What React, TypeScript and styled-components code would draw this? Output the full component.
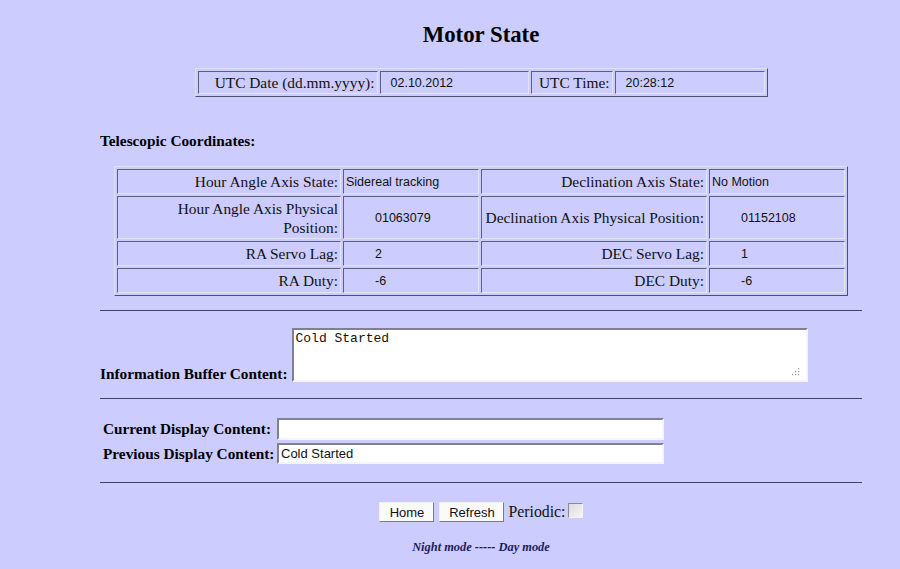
import React from "react";
import styled, { createGlobalStyle } from "styled-components";

const Global = createGlobalStyle`
  html, body { margin: 0; padding: 0; background: #ccccff; }
  body { font-family: "Liberation Serif", "Times New Roman", serif; color: #000; }
`;

const Page = styled.div`
  width: 762px;
  margin-left: 100px;
  height: 569px;
  overflow: hidden;
`;

const Title = styled.h1`
  margin: 22px 0 0;
  font-size: 22.8px;
  line-height: 25px;
  font-weight: bold;
  text-align: center;
`;

const BevelTable = styled.table<{ $w: number; $mt: number }>`
  width: ${(p) => p.$w}px;
  margin: ${(p) => p.$mt}px auto 0;
  table-layout: fixed;
  border-collapse: separate;
  border-spacing: 2px;
  border: 1px solid;
  border-color: #e0e0f4 #50506c #50506c #e0e0f4;
`;

const Cell = styled.td<{ $kind: "label" | "value"; $indent?: number; $h: number }>`
  border: 1px solid;
  border-color: #60607c #e4e4f6 #e4e4f6 #60607c;
  height: ${(p) => p.$h}px;
  padding: ${(p) => (p.$kind === "label" ? "0 2px 0 2px" : `2px 2px 0 ${p.$indent ?? 2}px`)};
  box-sizing: border-box;
  text-align: ${(p) => (p.$kind === "label" ? "right" : "left")};
  vertical-align: middle;
  white-space: pre-line;
  font-family: ${(p) =>
    p.$kind === "label"
      ? `"Liberation Serif", "Times New Roman", serif`
      : `"Liberation Sans", Arial, sans-serif`};
  font-size: ${(p) => (p.$kind === "label" ? "15.4px" : "12.5px")};
  line-height: ${(p) => (p.$kind === "label" ? "19px" : "15px")};
  color: #111;
`;

const SectionLabel = styled.div`
  margin-top: 35px;
  font-size: 15.3px;
  line-height: 18px;
  font-weight: bold;
`;

const Rule = styled.div<{ $mt: number }>`
  margin-top: ${(p) => p.$mt}px;
  border-top: 1px solid #44445e;
  height: 0;
`;

const InfoRow = styled.div`
  margin-top: 17px;
  display: flex;
  align-items: flex-end;
  gap: 4px;
`;

const BoldLabel = styled.label`
  font-size: 15.3px;
  font-weight: bold;
  line-height: 18px;
  white-space: nowrap;
`;

const InfoLabel = styled(BoldLabel)`
  padding-bottom: 0;
  margin-bottom: -1px;
`;

const insetField = `
  box-sizing: border-box;
  border: 2px solid;
  border-color: #80808e #f4f4fa #f4f4fa #80808e;
  background: #fff;
  outline: none;
  margin: 0;
`;

const TextAreaWrap = styled.div`
  position: relative;
  display: flex;
`;

const TextArea = styled.textarea`
  ${insetField}
  width: 516px;
  height: 54px;
  padding: 1px 2px;
  font-family: "Liberation Mono", "Courier New", monospace;
  font-size: 13px;
  line-height: 15px;
  color: #111;
  resize: none;
`;

const Grip = styled.svg`
  position: absolute;
  right: 8px;
  bottom: 6px;
  width: 9px;
  height: 9px;
`;

const DisplayGrid = styled.div`
  margin-top: 19px;
  display: grid;
  grid-template-columns: 177px 387px;
  grid-template-rows: 22px 21px;
  row-gap: 3px;
  align-items: center;
`;

const DisplayLabel = styled(BoldLabel)`
  padding-left: 3px;
`;

const TextInput = styled.input`
  ${insetField}
  width: 387px;
  height: 100%;
  padding: 0 2px;
  font-family: "Liberation Sans", Arial, sans-serif;
  font-size: 13px;
  color: #111;
`;

const ButtonRow = styled.div`
  margin-top: 19px;
  display: flex;
  justify-content: center;
  align-items: center;
  height: 20px;
`;

const Button = styled.button<{ $w: number }>`
  width: ${(p) => p.$w}px;
  height: 20px;
  margin: 0 5px 0 0;
  padding: 0;
  box-sizing: border-box;
  border: 1px solid;
  border-color: #f0f0f0 #7a7a88 #7a7a88 #f0f0f0;
  background: #fafafa;
  font-family: "Liberation Sans", Arial, sans-serif;
  font-size: 13px;
  color: #111;
`;

const PeriodicLabel = styled.span`
  margin-left: -1px;
  font-size: 15.8px;
  line-height: 20px;
  color: #111;
`;

const Check = styled.input`
  appearance: none;
  width: 15px;
  height: 15px;
  margin: -3px 0 0 2px;
  box-sizing: border-box;
  border: 1px solid;
  border-color: #8a8a96 #f4f4f8 #f4f4f8 #8a8a96;
  background: linear-gradient(135deg, #dcdcdc, #f6f6f6);
`;

const ModeLine = styled.div`
  margin-top: 17px;
  text-align: center;
  font-size: 12.4px;
  line-height: 16px;
  font-weight: bold;
  font-style: italic;
  color: #1c1c5e;
`;

const utc = [
  { label: "UTC Date (dd.mm.yyyy):", value: "02.10.2012" },
  { label: "UTC Time:", value: "20:28:12" },
];

type Pair = { label: string; value: string; indent: number };
const coordRows: { h: number; cells: Pair[] }[] = [
  {
    h: 25,
    cells: [
      { label: "Hour Angle Axis State:", value: "Sidereal tracking", indent: 2 },
      { label: "Declination Axis State:", value: "No Motion", indent: 2 },
    ],
  },
  {
    h: 43,
    cells: [
      { label: "Hour Angle Axis Physical\nPosition:", value: "01063079", indent: 31 },
      { label: "Declination Axis Physical Position:", value: "01152108", indent: 31 },
    ],
  },
  {
    h: 25,
    cells: [
      { label: "RA Servo Lag:", value: "2", indent: 31 },
      { label: "DEC Servo Lag:", value: "1", indent: 31 },
    ],
  },
  {
    h: 25,
    cells: [
      { label: "RA Duty:", value: "-6", indent: 31 },
      { label: "DEC Duty:", value: "-6", indent: 31 },
    ],
  },
];

export default function App() {
  return (
    <>
      <Global />
      <Page>
        <Title>Motor State</Title>

        <BevelTable $w={573} $mt={21}>
          <colgroup>
            <col style={{ width: 180 }} />
            <col style={{ width: 149 }} />
            <col style={{ width: 82 }} />
            <col style={{ width: 150 }} />
          </colgroup>
          <tbody>
            <tr>
              {utc.map((u) => (
                <React.Fragment key={u.label}>
                  <Cell $kind="label" $h={23}>{u.label}</Cell>
                  <Cell $kind="value" $indent={10} $h={23}>{u.value}</Cell>
                </React.Fragment>
              ))}
            </tr>
          </tbody>
        </BevelTable>

        <SectionLabel>Telescopic Coordinates:</SectionLabel>

        <BevelTable $w={734} $mt={16}>
          <colgroup>
            <col style={{ width: 224 }} />
            <col style={{ width: 136 }} />
            <col style={{ width: 226 }} />
            <col style={{ width: 136 }} />
          </colgroup>
          <tbody>
            {coordRows.map((row, i) => (
              <tr key={i}>
                {row.cells.map((c) => (
                  <React.Fragment key={c.label}>
                    <Cell $kind="label" $h={row.h}>{c.label}</Cell>
                    <Cell $kind="value" $indent={c.indent} $h={row.h}>{c.value}</Cell>
                  </React.Fragment>
                ))}
              </tr>
            ))}
          </tbody>
        </BevelTable>

        <Rule $mt={14} />

        <InfoRow>
          <InfoLabel htmlFor="info">Information Buffer Content:</InfoLabel>
          <TextAreaWrap>
            <TextArea id="info" defaultValue="Cold Started" readOnly />
            <Grip viewBox="0 0 9 9">
              <g fill="#9a9aa4">
                <rect x="7" y="1" width="1.2" height="1.2" />
                <rect x="4" y="4" width="1.2" height="1.2" />
                <rect x="7" y="4" width="1.2" height="1.2" />
                <rect x="1" y="7" width="1.2" height="1.2" />
                <rect x="4" y="7" width="1.2" height="1.2" />
                <rect x="7" y="7" width="1.2" height="1.2" />
              </g>
            </Grip>
          </TextAreaWrap>
        </InfoRow>

        <Rule $mt={16} />

        <DisplayGrid>
          <DisplayLabel htmlFor="cur">Current Display Content:</DisplayLabel>
          <TextInput id="cur" defaultValue="" readOnly />
          <DisplayLabel htmlFor="prev">Previous Display Content:</DisplayLabel>
          <TextInput id="prev" defaultValue="Cold Started" readOnly />
        </DisplayGrid>

        <Rule $mt={18} />

        <ButtonRow>
          <Button $w={55}>Home</Button>
          <Button $w={65}>Refresh</Button>
          <PeriodicLabel>Periodic:</PeriodicLabel>
          <Check type="checkbox" />
        </ButtonRow>

        <ModeLine>Night mode ----- Day mode</ModeLine>
      </Page>
    </>
  );
}
